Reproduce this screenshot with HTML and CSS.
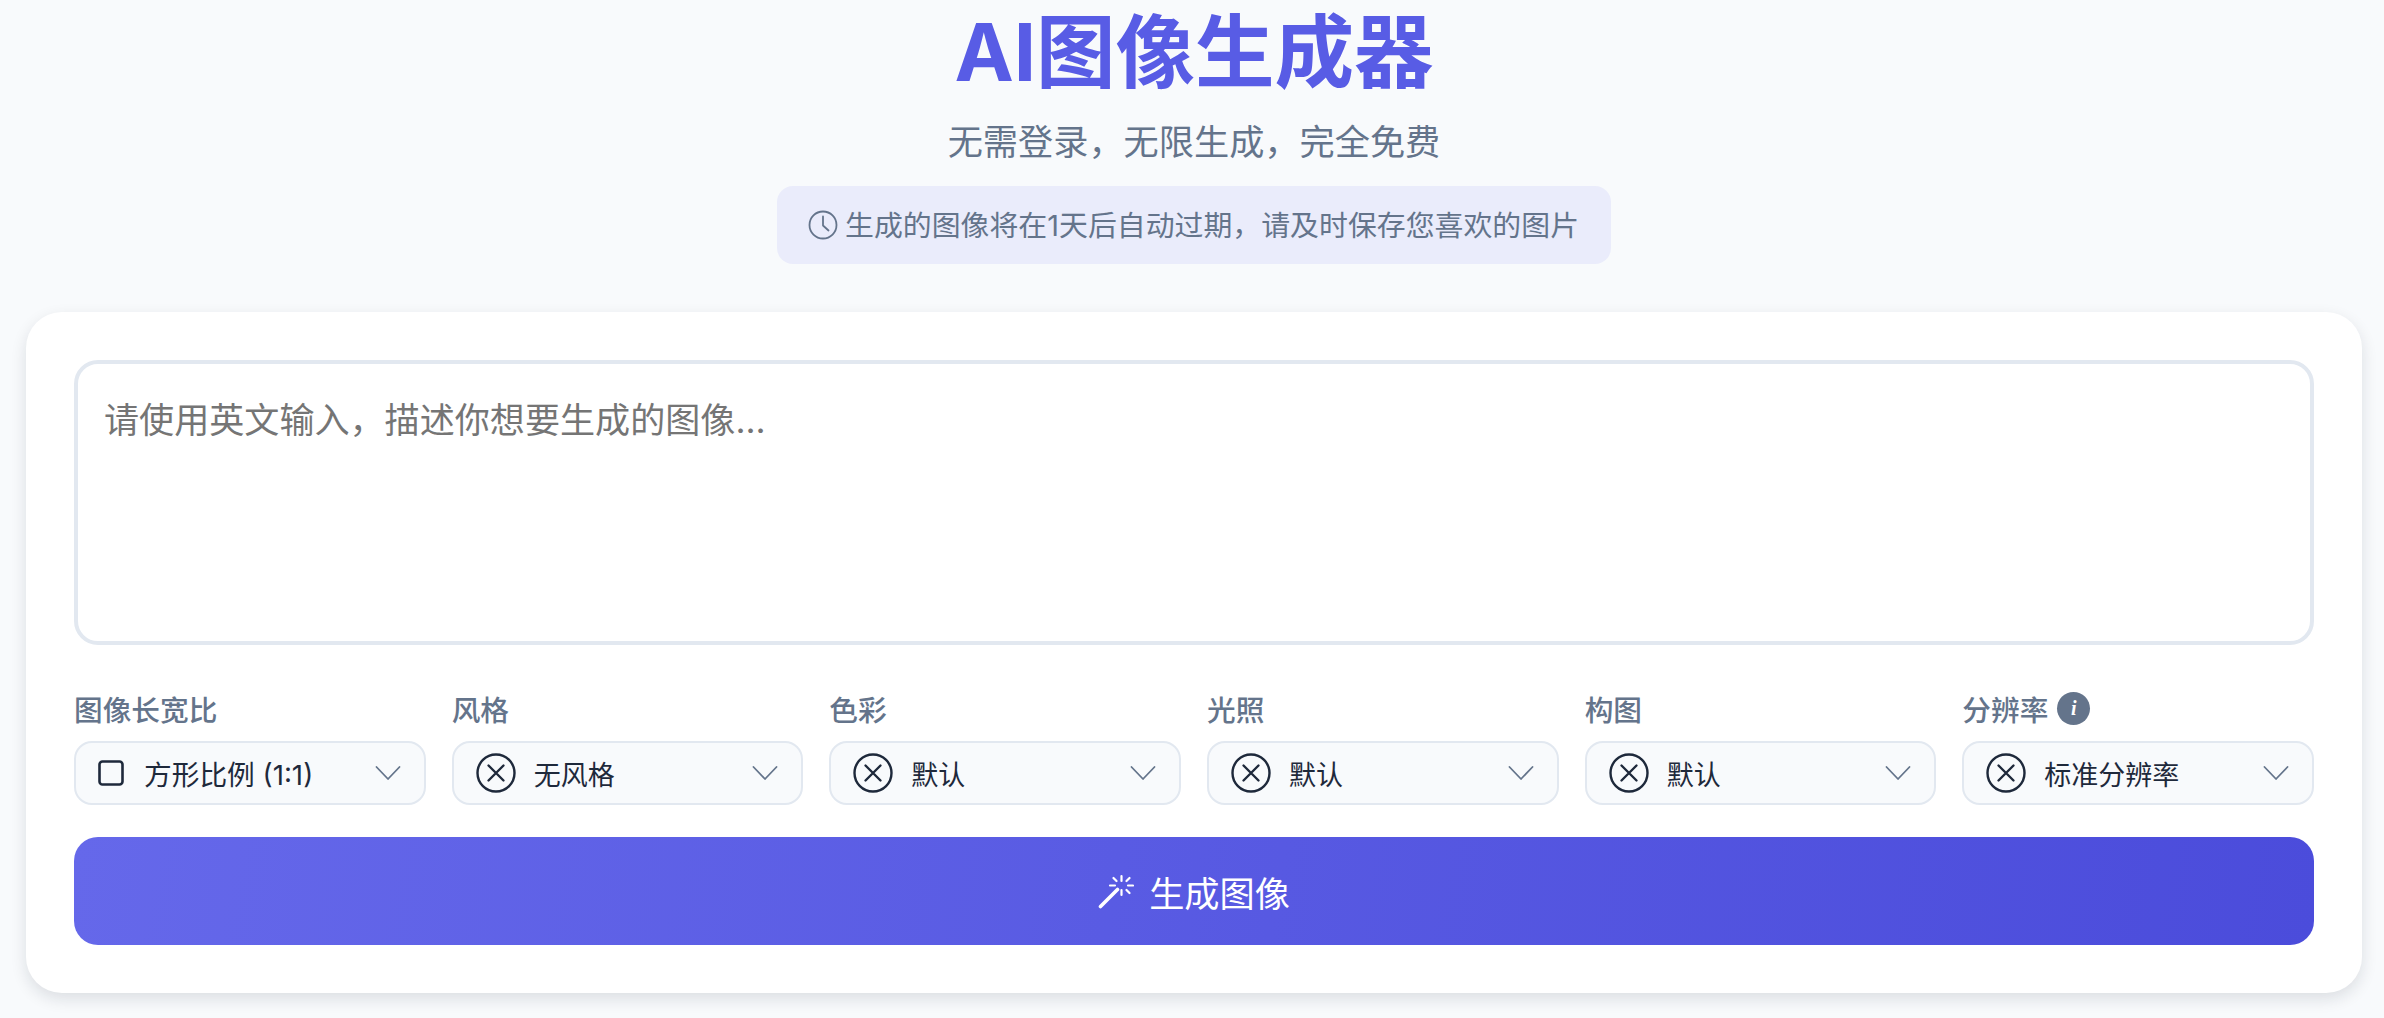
FILE: index.html
```html
<!DOCTYPE html>
<html lang="zh-CN">
<head>
    <meta charset="UTF-8">
    <title>AI图像生成器</title>
    <link rel="stylesheet" href="styles.css">
</head>
<body>
    <svg class="sprites" width="0" height="0">
        <symbol id="icon-none" viewBox="0 0 40 40">
            <circle cx="20" cy="20" r="18.5" fill="none" stroke="currentColor" stroke-width="2.4"/>
            <path d="M12.5 12.5l15 15M27.5 12.5l-15 15" fill="none" stroke="currentColor" stroke-width="2.4" stroke-linecap="round"/>
        </symbol>
        <symbol id="icon-chevron" viewBox="0 0 26 16">
            <path d="M1.5 2l11.5 12L24.500 2" fill="none" stroke="currentColor" stroke-width="1.8" stroke-linecap="round" stroke-linejoin="round"/>
        </symbol>
    </svg>

    <div class="page">
        <header class="hero">
            <h1>AI图像生成器</h1>
            <p class="subtitle">无需登录，无限生成，完全免费</p>
            <div class="notice">
                <svg class="notice-icon" viewBox="0 0 30 30">
                    <circle cx="15" cy="15" r="13.500" fill="none" stroke="currentColor" stroke-width="1.8"/>
                    <path d="M15 6.500V15.500l5.500 5" fill="none" stroke="currentColor" stroke-width="1.8" stroke-linecap="round" stroke-linejoin="round"/>
                </svg>
                <span>生成的图像将在1天后自动过期，请及时保存您喜欢的图片</span>
            </div>
        </header>

        <main class="card">
            <textarea class="prompt" placeholder="请使用英文输入，描述你想要生成的图像..."></textarea>

            <div class="options">
                <div class="option">
                    <div class="option-label">图像长宽比</div>
                    <div class="select">
                        <svg class="icon-square" viewBox="0 0 26 26">
                            <rect x="1.500" y="1.500" width="23" height="23" rx="3" fill="none" stroke="currentColor" stroke-width="2.600"/>
                        </svg>
                        <span class="select-text narrow">方形比例 (1:1)</span>
                        <svg class="chevron"><use href="#icon-chevron"/></svg>
                    </div>
                </div>
                <div class="option">
                    <div class="option-label">风格</div>
                    <div class="select">
                        <svg class="icon-none"><use href="#icon-none"/></svg>
                        <span class="select-text">无风格</span>
                        <svg class="chevron"><use href="#icon-chevron"/></svg>
                    </div>
                </div>
                <div class="option">
                    <div class="option-label">色彩</div>
                    <div class="select">
                        <svg class="icon-none"><use href="#icon-none"/></svg>
                        <span class="select-text">默认</span>
                        <svg class="chevron"><use href="#icon-chevron"/></svg>
                    </div>
                </div>
                <div class="option">
                    <div class="option-label">光照</div>
                    <div class="select">
                        <svg class="icon-none"><use href="#icon-none"/></svg>
                        <span class="select-text">默认</span>
                        <svg class="chevron"><use href="#icon-chevron"/></svg>
                    </div>
                </div>
                <div class="option">
                    <div class="option-label">构图</div>
                    <div class="select">
                        <svg class="icon-none"><use href="#icon-none"/></svg>
                        <span class="select-text">默认</span>
                        <svg class="chevron"><use href="#icon-chevron"/></svg>
                    </div>
                </div>
                <div class="option">
                    <div class="option-label">分辨率 <span class="info">i</span></div>
                    <div class="select">
                        <svg class="icon-none"><use href="#icon-none"/></svg>
                        <span class="select-text">标准分辨率</span>
                        <svg class="chevron"><use href="#icon-chevron"/></svg>
                    </div>
                </div>
            </div>

            <button class="generate">
                <svg class="wand" viewBox="0 0 36 36">
                    <path d="M2.500 33.500L19.500 16.500" fill="none" stroke="currentColor" stroke-width="3.600" stroke-linecap="round"/>
                    <path d="M23.500 3v5M23.500 17v5M12 12.500h5M30 12.500h5M15.500 5l3 3M28.500 17l3 3M31.500 5l-3 3" fill="none" stroke="currentColor" stroke-width="2.200" stroke-linecap="round"/>
                </svg>
                <span>生成图像</span>
            </button>
        </main>
    </div>
</body>
</html>
```

FILE: styles.css
```css
* {
    box-sizing: border-box;
}

body {
    margin: 0;
    background-color: #f8fafc;
    font-family: Inter, "Noto Sans CJK SC", sans-serif;
    color: #1e293b;
}

.sprites {
    position: absolute;
}

.page {
    padding: 0 22px 26px 26px;
}

.hero {
    display: flex;
    flex-direction: column;
    align-items: center;
}

h1 {
    margin: 0;
    height: 104px;
    font-size: 79.500px;
    line-height: 104px;
    font-weight: 700;
    color: #585ce5;
}

.subtitle {
    margin: 18px 0 0;
    font-size: 35.200px;
    line-height: 40px;
    color: #64748b;
}

.notice {
    display: flex;
    align-items: center;
    gap: 7px;
    width: 834px;
    height: 78px;
    margin-top: 24px;
    padding-left: 31px;
    background-color: #eaecfb;
    border-radius: 16px;
    font-size: 28.900px;
    line-height: 42px;
    color: #64748b;
}

.notice span {
    padding-top: 2px;
}

.notice-icon {
    width: 30px;
    height: 30px;
    flex: none;
}

.card {
    margin-top: 48px;
    padding: 48px;
    background-color: #fff;
    border-radius: 36px;
    box-shadow: 0 6px 16px rgba(15, 23, 42, 0.12);
}

.prompt {
    display: block;
    width: 100%;
    height: 285px;
    padding: 33px 26px 26px;
    border: 4px solid #e2e8f0;
    border-radius: 24px;
    background: #fff;
    font-family: inherit;
    font-size: 35.100px;
    line-height: 46px;
    resize: none;
    outline: none;
}

.prompt::placeholder {
    color: #757575;
}

.options {
    display: grid;
    grid-template-columns: repeat(6, 1fr);
    gap: 26px;
    margin-top: 47px;
}

.option-label {
    display: flex;
    align-items: center;
    gap: 9px;
    height: 34px;
    margin-bottom: 15px;
    padding-bottom: 2px;
    font-size: 28.700px;
    font-weight: 500;
    color: #64748b;
}

.info {
    display: inline-flex;
    align-items: center;
    justify-content: center;
    width: 33px;
    height: 33px;
    border-radius: 50%;
    background-color: #64748b;
    color: #fff;
    font-family: "Liberation Serif", serif;
    font-style: italic;
    font-weight: 700;
    font-size: 20px;
}

.select {
    display: flex;
    align-items: center;
    height: 64px;
    padding: 0 23px 0 22px;
    background-color: #f8fafc;
    border: 2px solid #e2e8f0;
    border-radius: 18px;
}

.select-text {
    flex: 1;
    font-size: 27px;
    white-space: nowrap;
}

.select-text.narrow {
    font-size: 27.700px;
}

.icon-square {
    width: 26px;
    height: 26px;
    margin-right: 20px;
    flex: none;
}

.icon-none {
    width: 40px;
    height: 40px;
    margin-right: 18px;
    flex: none;
}

.chevron {
    width: 26px;
    height: 16px;
    flex: none;
    color: #64748b;
}

.generate {
    display: flex;
    align-items: center;
    justify-content: center;
    gap: 15px;
    width: 100%;
    height: 108px;
    margin-top: 32px;
    border: none;
    border-radius: 24px;
    background: linear-gradient(100deg, #6568ea, #4b4cdb);
    color: #fff;
    font-family: inherit;
    font-size: 35.200px;
}

.wand {
    width: 36px;
    height: 36px;
}
```
